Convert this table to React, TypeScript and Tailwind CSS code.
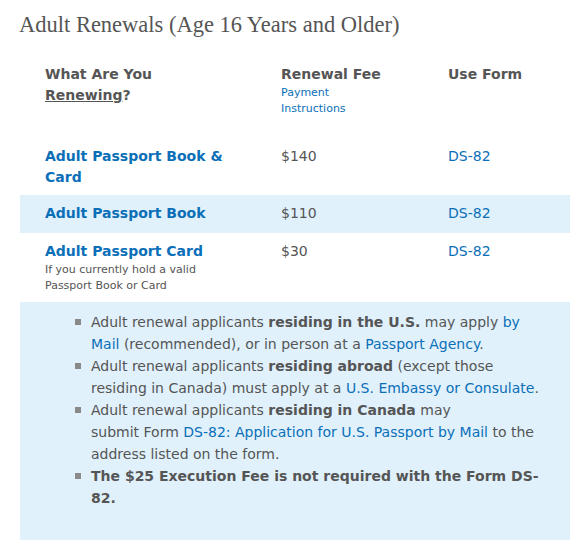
import React from "react";

const link = "text-[#0b6fb8]";

function Bullet({ children }: { children: React.ReactNode }) {
  return (
    <li className="flex">
      <span className="mt-[8px] mr-[10px] h-[6px] w-[6px] shrink-0 bg-[#8a8a8a]" />
      <span>{children}</span>
    </li>
  );
}

export default function App() {
  return (
    <div className="w-[578px] h-[547px] bg-white text-[#555555]" style={{ fontFamily: "'DejaVu Sans', Verdana, sans-serif" }}>
      <h1 className="pl-[19px] pt-[10px] text-[22.5px] leading-[30px] text-[#555555]" style={{ fontFamily: "'Liberation Serif', Georgia, serif" }}>
        Adult Renewals (Age 16 Years and Older)
      </h1>
      <div className="ml-[20px] mr-[8px] mt-[24px]">
        <div className="grid grid-cols-[236px_167px_1fr] pl-[25px] pb-[22px] text-[13px]">
          <div className="font-bold text-[14px] leading-[21px]">
            What Are You<br /><span className="underline">Renewing</span>?
          </div>
          <div>
            <div className="font-bold text-[14px] leading-[21px]">Renewal Fee</div>
            <div className={`${link} text-[11px] leading-[16px]`}>Payment<br />Instructions</div>
          </div>
          <div className="font-bold text-[14px] leading-[21px]">Use Form</div>
        </div>
        <div className="grid grid-cols-[236px_167px_1fr] pl-[25px] py-[7px] text-[14px] leading-[21px]">
          <div className={`${link} font-bold`}>Adult Passport Book &amp;<br />Card</div>
          <div>$140</div>
          <div className={link}>DS-82</div>
        </div>
        <div className="grid grid-cols-[236px_167px_1fr] pl-[25px] pt-[8px] pb-[9px] text-[14px] leading-[21px] bg-[#e0f1fc]">
          <div className={`${link} font-bold`}>Adult Passport Book</div>
          <div>$110</div>
          <div className={link}>DS-82</div>
        </div>
        <div className="grid grid-cols-[236px_167px_1fr] pl-[25px] pt-[8px] pb-[8px] text-[14px] leading-[21px]">
          <div>
            <div className={`${link} font-bold`}>Adult Passport Card</div>
            <div className="text-[11px] leading-[16px]">If you currently hold a valid<br />Passport Book or Card</div>
          </div>
          <div>$30</div>
          <div className={link}>DS-82</div>
        </div>
        <div className="bg-[#e0f1fc] h-[238px] pl-[55px] pr-[20px] pt-[9px] text-[14px] leading-[22px]">
          <ul>
            <Bullet>
              Adult renewal applicants <b>residing in the U.S.</b> may apply <span className={link}>by Mail</span> (recommended), or in person at a <span className={link}>Passport Agency</span>.
            </Bullet>
            <Bullet>
              Adult renewal applicants <b>residing abroad</b> (except those residing in Canada) must apply at a <span className={link}>U.S. Embassy or Consulate</span>.
            </Bullet>
            <Bullet>
              Adult renewal applicants <b>residing in Canada</b> may<br />submit Form <span className={link}>DS-82: Application for U.S. Passport by Mail</span> to the address listed on the form.
            </Bullet>
            <Bullet>
              <b>The $25 Execution Fee is not required with the Form DS-82.</b>
            </Bullet>
          </ul>
        </div>
      </div>
    </div>
  );
}
